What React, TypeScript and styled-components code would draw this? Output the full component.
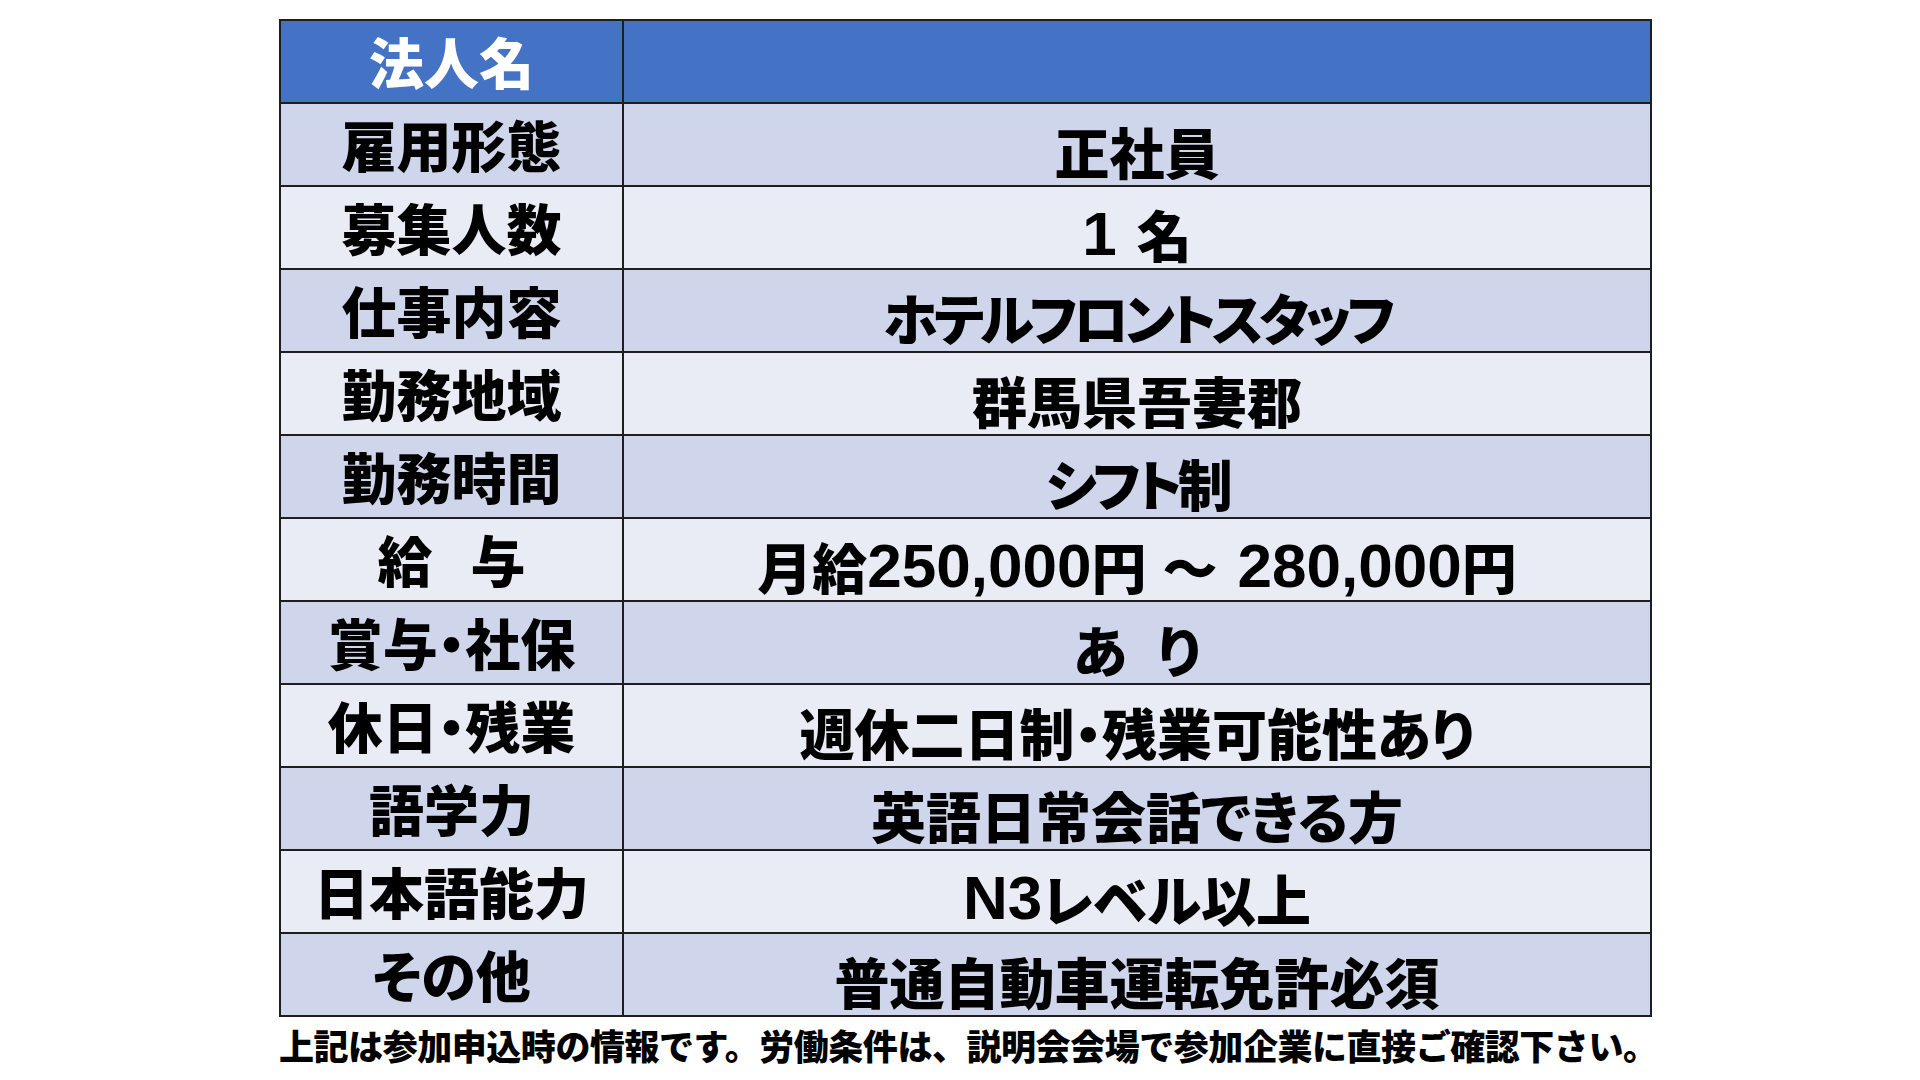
import React from "react";
import styled, { createGlobalStyle } from "styled-components";

const GlobalStyle = createGlobalStyle`
  html, body { margin: 0; padding: 0; background: #ffffff; }
  body { font-family: "Noto Sans CJK JP", "Noto Sans", sans-serif; }
`;

const Slide = styled.div`
  width: 1920px;
  height: 1080px;
  box-sizing: border-box;
  padding: 19px 0 0 279px;
  background: #ffffff;
  overflow: hidden;
`;

const Table = styled.div`
  width: 1373px;
  box-sizing: border-box;
  border: 2px solid #1e1e1e;
  display: flex;
  flex-direction: column;
`;

const Row = styled.div<{ $tone: "head" | "dark" | "light"; $first?: boolean }>`
  display: grid;
  grid-template-columns: 343px 1fr;
  box-sizing: border-box;
  border-top: ${(p) => (p.$first ? "0" : "2px solid #1e1e1e")};
  height: ${(p) => (p.$first ? "81px" : "83px")};
  background: ${(p) =>
    p.$tone === "head" ? "#4472c4" : p.$tone === "dark" ? "#cfd5ea" : "#e9ebf5"};
  color: ${(p) => (p.$tone === "head" ? "#ffffff" : "#000000")};
`;

const Cell = styled.div`
  display: flex;
  align-items: center;
  justify-content: center;
  box-sizing: border-box;
  font-family: "Noto Sans CJK JP", "Noto Sans", sans-serif;
  font-weight: 900;
  font-size: 55px;
  line-height: 1;
  font-feature-settings: "palt";
  white-space: pre;
`;

const Label = styled(Cell)`
  border-right: 2px solid #1e1e1e;
  padding-bottom: 2px;
`;

const Value = styled(Cell)<{ $tight?: boolean }>`
  padding-top: 12px;
  letter-spacing: ${(p) => (p.$tight ? "-4.5px" : "0")};
`;

const Latin = styled.span`
  font-family: "Liberation Sans", Arial, sans-serif;
  font-weight: 700;
  font-size: 62px;
`;

const Gap = styled.span<{ $w: number }>`
  display: inline-block;
  width: ${(p) => p.$w}px;
`;

const Note = styled.p`
  margin: 7px 0 0 0;
  font-family: "Noto Sans CJK JP", "Noto Sans", sans-serif;
  font-weight: 900;
  font-size: 35px;
  line-height: 1.2;
  letter-spacing: -0.45px;
  color: #000000;
  white-space: nowrap;
`;

type RowData = { label: React.ReactNode; key: string; value: React.ReactNode; tight?: boolean };

const rows: RowData[] = [
  { key: "a", label: "雇用形態", value: "正社員" },
  {
    key: "b",
    label: "募集人数",
    value: (
      <>
        <Latin>1</Latin>
        <Gap $w={20} />名
      </>
    ),
  },
  { key: "c", label: "仕事内容", value: "ホテルフロントスタッフ", tight: true },
  { key: "d", label: "勤務地域", value: "群馬県吾妻郡" },
  { key: "e", label: "勤務時間", value: "シフト制", tight: true },
  {
    key: "f",
    label: (
      <>
        給<Gap $w={38} />与
      </>
    ),
    value: (
      <>
        月給<Latin>250,000</Latin>円<Gap $w={16} />～<Gap $w={20} />
        <Latin>280,000</Latin>円
      </>
    ),
  },
  {
    key: "g",
    label: "賞与・社保",
    value: (
      <>
        あ<Gap $w={30} />り
      </>
    ),
  },
  { key: "h", label: "休日・残業", value: "週休二日制・残業可能性あり" },
  { key: "i", label: "語学力", value: "英語日常会話できる方" },
  {
    key: "j",
    label: "日本語能力",
    value: (
      <>
        <Latin>N3</Latin>レベル以上
      </>
    ),
  },
  { key: "k", label: "その他", value: "普通自動車運転免許必須" },
];

export default function App() {
  return (
    <>
      <GlobalStyle />
      <Slide>
        <Table>
          <Row $tone="head" $first>
            <Label>法人名</Label>
            <Value />
          </Row>
          {rows.map((r, i) => (
            <Row key={r.key} $tone={i % 2 === 0 ? "dark" : "light"}>
              <Label>{r.label}</Label>
              <Value $tight={r.tight}>{r.value}</Value>
            </Row>
          ))}
        </Table>
        <Note>
          上記は参加申込時の情報です。労働条件は、説明会会場で参加企業に直接ご確認下さい。
        </Note>
      </Slide>
    </>
  );
}
